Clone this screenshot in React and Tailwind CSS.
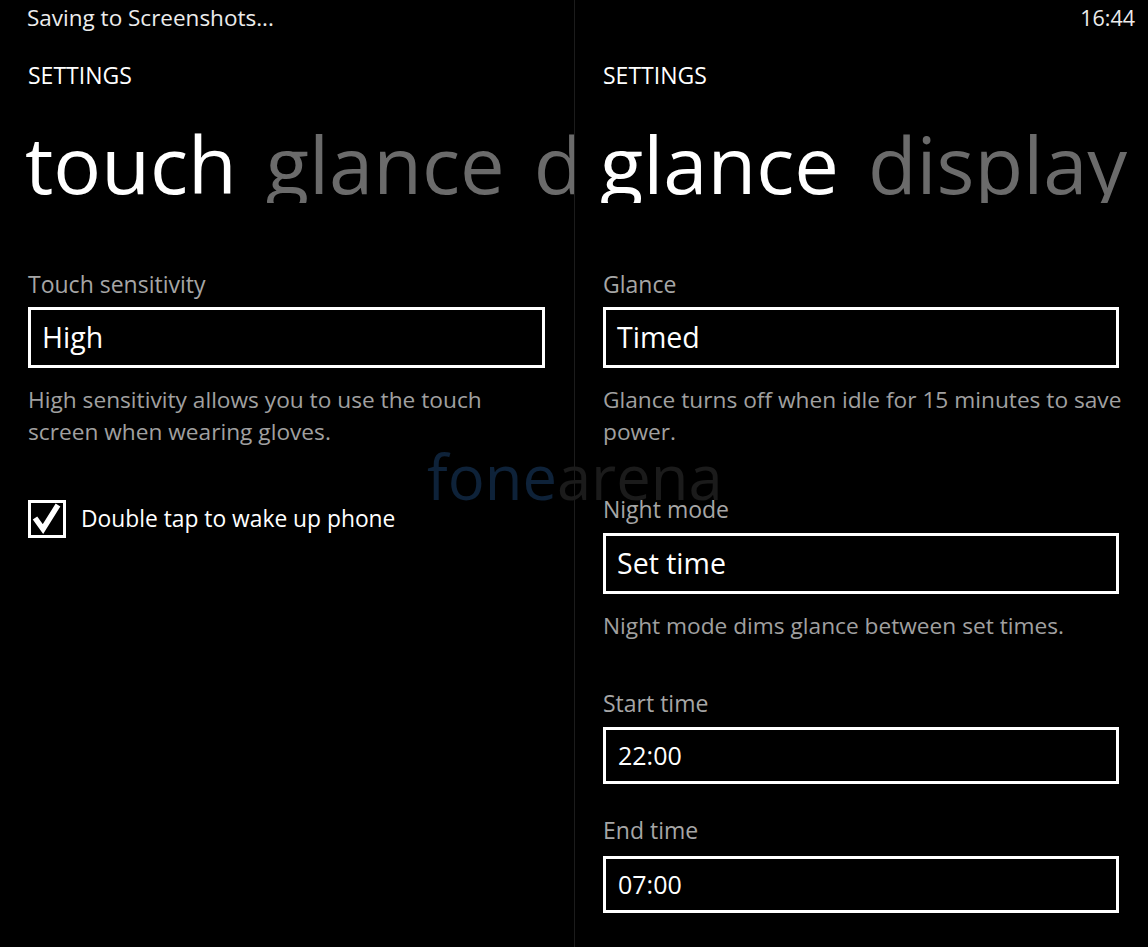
import React from 'react'

const font = { fontFamily: '"Open Sans", "Noto Sans", sans-serif' }

const Field = ({ value, tall = true, small = false }) => (
  <div
    className={`border-[3px] border-white flex items-center ${small ? 'pl-[12px]' : 'pl-[11px]'} ${tall ? 'h-[61px]' : 'h-[57px]'}`}
  >
    <span className={`text-white ${small ? 'text-[25px]' : 'text-[28.5px]'} leading-none`}>{value}</span>
  </div>
)

const Label = ({ children, className = '' }) => (
  <div className={`text-[23px] leading-[28px] text-[#a6a6a6] whitespace-nowrap ${className}`}>{children}</div>
)

const Note = ({ children, className = '' }) => (
  <p className={`text-[22.7px] leading-[32px] text-[#a0a0a0] whitespace-nowrap ${className}`}>{children}</p>
)

const Check = () => (
  <div className="w-[38px] h-[38px] border-[3px] border-white flex items-center justify-center shrink-0">
    <svg width="32" height="32" viewBox="0 0 32 32">
      <polyline points="4,15 12,26 27,2" fill="none" stroke="white" strokeWidth="5.5" strokeLinejoin="miter" />
    </svg>
  </div>
)

const Header = ({ active, next, cut }) => (
  <div className="mt-[34px] h-[79px] flex whitespace-nowrap overflow-hidden text-[79.5px] leading-[79px] -ml-[3px] -mr-[29px]">
    <span className="text-white">{active}</span>
    <span className="text-[#6b6b6b] ml-[29px]">{next}</span>
    {cut && <span className="text-[#6b6b6b] ml-[29px]">{cut}</span>}
  </div>
)

const TouchPanel = () => (
  <div className="w-[575px] shrink-0 h-full pl-[28px] pr-[29px] border-r border-[#1c1c1c] overflow-hidden">
    <div className="h-[36px] flex items-center text-[22.5px] text-[#ececec] -ml-[1px] whitespace-nowrap">Saving to Screenshots...</div>
    <div className="mt-[24px] h-[30px] text-[23px] leading-[30px] text-white">SETTINGS</div>
    <Header active="touch" next="glance" cut="display" />
    <Label className="mt-[67px]">Touch sensitivity</Label>
    <div className="mt-[9px]">
      <Field value="High" />
    </div>
    <Note className="mt-[16px]">
      High sensitivity allows you to use the touch<br />screen when wearing gloves.
    </Note>
    <div className="mt-[52px] flex items-center gap-[15px]">
      <Check />
      <span className="text-white text-[22.8px]">Double tap to wake up phone</span>
    </div>
  </div>
)

const GlancePanel = () => (
  <div className="flex-1 h-full pl-[28px] pr-[29px] overflow-hidden">
    <div className="h-[36px] flex items-center justify-end text-[21.5px] text-[#ececec] -mr-[16px]">16:44</div>
    <div className="mt-[24px] h-[30px] text-[23px] leading-[30px] text-white">SETTINGS</div>
    <Header active="glance" next="display" />
    <Label className="mt-[67px]">Glance</Label>
    <div className="mt-[9px]">
      <Field value="Timed" />
    </div>
    <Note className="mt-[16px]">
      Glance turns off when idle for 15 minutes to save<br />power.
    </Note>
    <Label className="mt-[47px]">Night mode</Label>
    <div className="mt-[10px]">
      <Field value="Set time" />
    </div>
    <Note className="mt-[16px]">Night mode dims glance between set times.</Note>
    <Label className="mt-[47px]">Start time</Label>
    <div className="mt-[10px]">
      <Field value="22:00" tall={false} small />
    </div>
    <Label className="mt-[32px]">End time</Label>
    <div className="mt-[12px]">
      <Field value="07:00" tall={false} small />
    </div>
  </div>
)

export default function App() {
  return (
    <div className="relative w-[1148px] h-[947px] bg-black flex overflow-hidden" style={font}>
      <TouchPanel />
      <GlancePanel />
      <div className="absolute left-[427px] top-[446px] text-[61.5px] leading-none pointer-events-none whitespace-nowrap">
        <span className="text-[#0e2239]">fone</span>
        <span className="text-[#1b1b1b]">arena</span>
      </div>
    </div>
  )
}
